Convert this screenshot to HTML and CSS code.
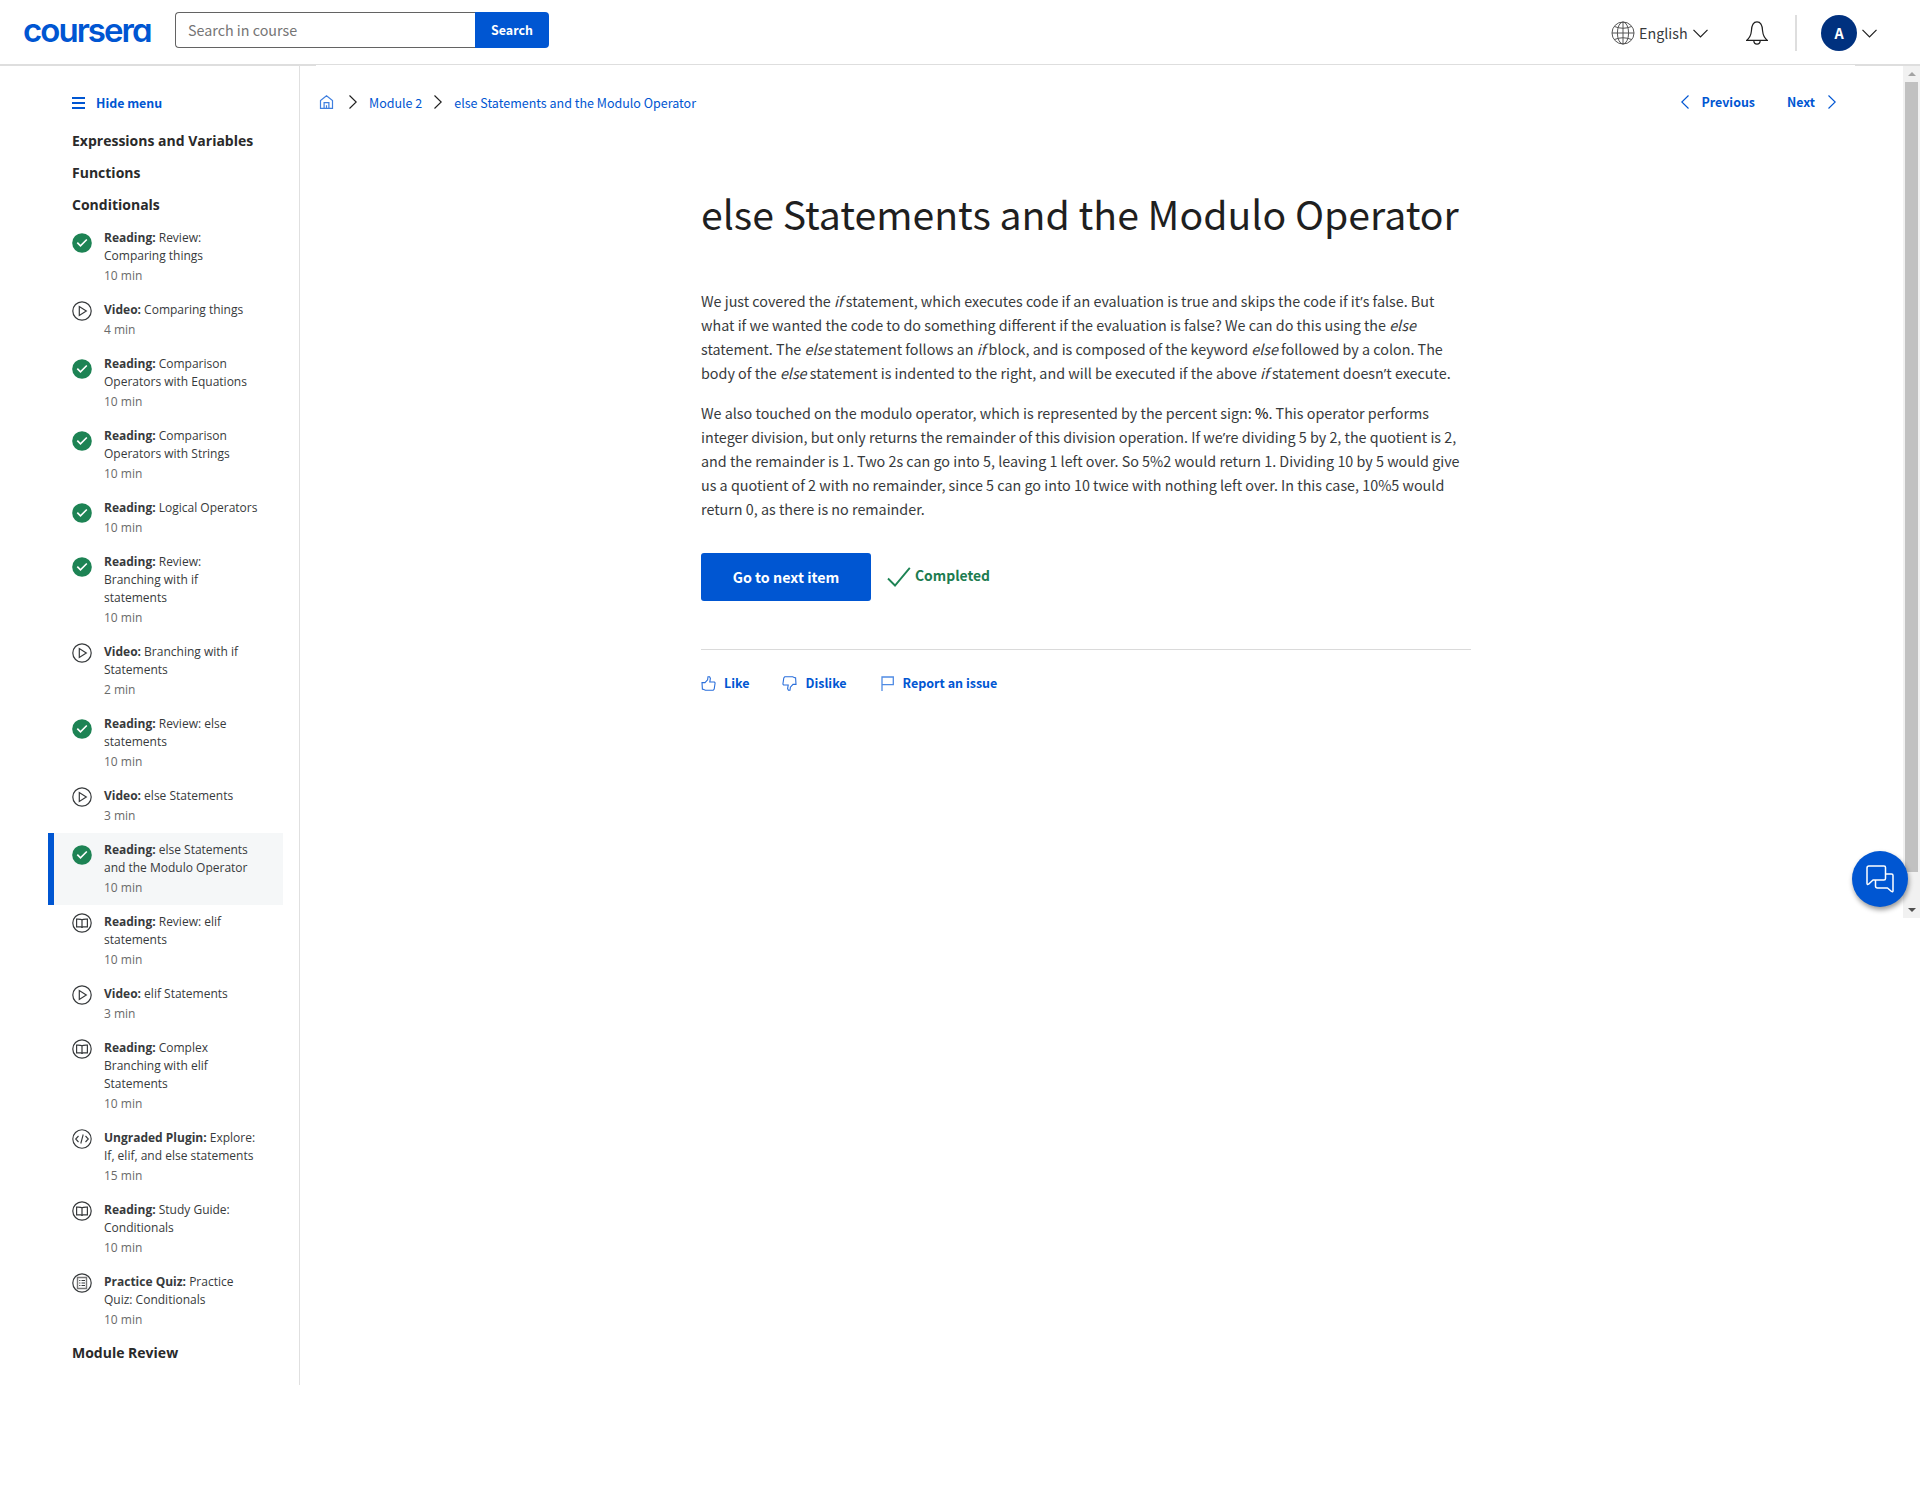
FILE: index.html
```html
<!DOCTYPE html>
<html lang="en">
<head>
<meta charset="utf-8">
<title>else Statements and the Modulo Operator | Coursera</title>
<link rel="stylesheet" href="styles.css">
</head>
<body>
<svg class="defs" aria-hidden="true">
  <symbol id="done" viewBox="0 0 20 20"><circle cx="10" cy="10" r="9.8" fill="#1d8354"/><path d="M5.3 9.6l3.2 3.2 6.3-6.3" fill="none" stroke="#fff" stroke-width="1.6"/></symbol>
  <symbol id="play" viewBox="0 0 20 20"><g fill="none" stroke="#373a3c" stroke-width="1.2"><circle cx="10" cy="10" r="9.2"/><path d="M7.3 5.5v9l7-4.5z"/></g></symbol>
  <symbol id="book" viewBox="0 0 20 20"><g fill="none" stroke="#373a3c" stroke-width="1.2"><circle cx="10" cy="10" r="9.2"/><path d="M10 6.8C9 6 7 6 4.6 6.100v7.800H9q1 0 1 1q0-1 1-1h4.400V6.100C13 6 11 6 10 6.800zV14.500"/></g></symbol>
  <symbol id="code" viewBox="0 0 20 20"><g fill="none" stroke="#373a3c" stroke-width="1.1"><circle cx="10" cy="10" r="9.200"/><path d="M6.500 7L3.700 10l2.800 3M13.500 7l2.800 3-2.800 3M11.200 5.500l-2.400 9"/></g></symbol>
  <symbol id="quiz" viewBox="0 0 20 20"><g fill="none" stroke="#373a3c" stroke-width="1.2"><circle cx="10" cy="10" r="9.200"/><path d="M5.500 4.500h9v11h-9z" stroke="#777" stroke-width="1.400"/><path d="M7.200 7.500h1.200M7.200 10h1.200M7.200 12.500h1.200M9.500 7.500h3.500M9.500 10h3.500M9.500 12.500h3.500"/></g></symbol>
  <symbol id="right" viewBox="0 0 8 14"><path d="M.5.500L7.200 7 .5 13.500" fill="none" stroke="currentColor" stroke-width="1.150"/></symbol>
  <symbol id="left" viewBox="0 0 8 14"><path d="M7.500.500L.8 7l6.700 6.500" fill="none" stroke="currentColor" stroke-width="1.150"/></symbol>
  <symbol id="down" viewBox="0 0 15 9"><path d="M.5.800l7 7 7-7" fill="none" stroke="currentColor" stroke-width="1.200"/></symbol>
</svg>

<header class="header">
  <a class="logo">coursera</a>
  <form class="search">
    <div class="search-field">Search in course</div>
    <div class="search-button">Search</div>
  </form>
  <div class="account">
    <svg class="globe" viewBox="0 0 24 24" fill="none" stroke="#555" stroke-width="1"><circle cx="12" cy="12" r="11"/><ellipse cx="12" cy="12" rx="5.600" ry="11"/><path d="M12 1v22M1 12h22M3.500 5.500q8.500 3.500 17 0M3.500 18.500q8.500-3.500 17 0"/></svg>
    <span class="language">English</span>
    <svg class="down language-arrow"><use href="#down"/></svg>
    <svg class="bell" viewBox="0 0 22 24" fill="none" stroke="#1f1f1f" stroke-width="1.200"><path d="M.6 19.400c3-2.400 4.400-5 4.800-9.400C5.600 4 7 .8 11 .8S16.400 4 16.600 10c.4 4.400 1.800 7 4.800 9.400zM7.800 19.600c.2 4.600 6.200 4.600 6.400 0"/></svg>
    <i class="divider"></i>
    <span class="avatar">A</span>
    <svg class="down"><use href="#down"/></svg>
  </div>
</header>

<div class="page">
  <aside class="sidebar">
    <a class="hide-menu"><i class="bars"></i>Hide menu</a>
    <nav class="outline">
      <h2>Expressions and Variables</h2>
      <h2>Functions</h2>
      <h2>Conditionals</h2>
      <a class="item done"><svg><use href="#done"/></svg><p><b>Reading:</b> Review:<br>Comparing things<small>10 min</small></p></a>
      <a class="item"><svg><use href="#play"/></svg><p><b>Video:</b> Comparing things<small>4 min</small></p></a>
      <a class="item done"><svg><use href="#done"/></svg><p><b>Reading:</b> Comparison<br>Operators with Equations<small>10 min</small></p></a>
      <a class="item done"><svg><use href="#done"/></svg><p><b>Reading:</b> Comparison<br>Operators with Strings<small>10 min</small></p></a>
      <a class="item done"><svg><use href="#done"/></svg><p><b>Reading:</b> Logical Operators<small>10 min</small></p></a>
      <a class="item done"><svg><use href="#done"/></svg><p><b>Reading:</b> Review:<br>Branching with if<br>statements<small>10 min</small></p></a>
      <a class="item"><svg><use href="#play"/></svg><p><b>Video:</b> Branching with if<br>Statements<small>2 min</small></p></a>
      <a class="item done"><svg><use href="#done"/></svg><p><b>Reading:</b> Review: else<br>statements<small>10 min</small></p></a>
      <a class="item"><svg><use href="#play"/></svg><p><b>Video:</b> else Statements<small>3 min</small></p></a>
      <a class="item done current"><svg><use href="#done"/></svg><p><b>Reading:</b> else Statements<br>and the Modulo Operator<small>10 min</small></p></a>
      <a class="item"><svg><use href="#book"/></svg><p><b>Reading:</b> Review: elif<br>statements<small>10 min</small></p></a>
      <a class="item"><svg><use href="#play"/></svg><p><b>Video:</b> elif Statements<small>3 min</small></p></a>
      <a class="item"><svg><use href="#book"/></svg><p><b>Reading:</b> Complex<br>Branching with elif<br>Statements<small>10 min</small></p></a>
      <a class="item"><svg><use href="#code"/></svg><p><b>Ungraded Plugin:</b> Explore:<br>If, elif, and else statements<small>15 min</small></p></a>
      <a class="item"><svg><use href="#book"/></svg><p><b>Reading:</b> Study Guide:<br>Conditionals<small>10 min</small></p></a>
      <a class="item"><svg><use href="#quiz"/></svg><p><b>Practice Quiz:</b> Practice<br>Quiz: Conditionals<small>10 min</small></p></a>
      <h2>Module Review</h2>
    </nav>
  </aside>

  <main class="main">
    <div class="topbar">
      <nav class="crumbs">
        <svg class="home" viewBox="0 0 14 14" fill="none" stroke="#3f7fdf" stroke-width="1.200"><path d="M1 13.300V5.500L7 .8l6 4.700v7.800zM4.600 13.300V7.600h4.800v5.700M7 13.300v-3"/></svg>
        <svg class="chevron"><use href="#right"/></svg>
        <a>Module 2</a>
        <svg class="chevron"><use href="#right"/></svg>
        <a>else Statements and the Modulo Operator</a>
      </nav>
      <nav class="pager">
        <a><svg class="chevron"><use href="#left"/></svg>Previous</a>
        <a>Next<svg class="chevron"><use href="#right"/></svg></a>
      </nav>
    </div>
    <article class="article">
      <h1>else Statements and the Modulo Operator</h1>
      <p>We just covered the <em>if</em> statement, which executes code if an evaluation is true and skips the code if it<span class="apos">’</span>s false. But<br>what if we wanted the code to do something different if the evaluation is false? We can do this using the <em>else</em><br>statement. The <em>else</em> statement follows an <em>if</em> block, and is composed of the keyword <em>else</em> followed by a colon. The<br>body of the <em>else</em> statement is indented to the right, and will be executed if the above <em>if</em> statement doesn<span class="apos">’</span>t execute.</p>
      <p>We also touched on the modulo operator, which is represented by the percent sign: <strong>%</strong>. This operator performs<br>integer division, but only returns the remainder of this division operation. If we<span class="apos">’</span>re dividing 5 by 2, the quotient is 2,<br>and the remainder is 1. Two 2s can go into 5, leaving 1 left over. So 5%2 would return 1. Dividing 10 by 5 would give<br>us a quotient of 2 with no remainder, since 5 can go into 10 twice with nothing left over. In this case, 10%5 would<br>return 0, as there is no remainder.</p>
      <div class="actions">
        <a class="next-button">Go to next item</a>
        <svg class="tick" viewBox="0 0 24 20" fill="none" stroke="#1d8354" stroke-width="1.900"><path d="M1 11.500l7 7L22.800.800"/></svg>
        <span class="completed">Completed</span>
      </div>
      <div class="feedback">
        <a><svg viewBox="0 0 15 15" fill="none" stroke="#2a6fdb" stroke-width="1.100"><path d="M1 6.600h3L6.600 3.800 7 .8h1.600l.8 1.600-.6 3.600h4.600l.7 1-.9 6-1 1.300H4.400L2.200 13.300H1.400z"/></svg>Like</a>
        <a><svg viewBox="0 0 15 15" fill="none" stroke="#2a6fdb" stroke-width="1.100"><path d="M14 8.400h-3L8.400 11.200 8 14.200H6.400L5.600 12.600 6.200 9H1.600L.9 8l.9-6 1-1.300h7.800l2.200 1h.8z"/></svg>Dislike</a>
        <a><svg viewBox="0 0 15 15" fill="none" stroke="#4f8be4" stroke-width="1.300"><path d="M2 15V1h11.300V8.600H2"/></svg>Report an issue</a>
      </div>
    </article>
  </main>

  <div class="scrollbar"><i class="arrow-up"></i><i class="thumb"></i><i class="arrow-down"></i></div>
</div>

<a class="chat"><svg viewBox="0 0 28 28" fill="none" stroke="#fff" stroke-width="1.500" stroke-linejoin="round"><path d="M3 1h15q1.500 0 1.500 1.500v11Q19.500 15 18 15H7l-4.500 4.200q-1.500.8-1.500-1V3q0-2 2-2z"/><path d="M20 9h5.500Q27 9 27 10.500v15.300q0 1.700-1.500.7L21.500 23H11.500q-2 0-2-2V15"/></svg></a>
</body>
</html>
```
FILE: styles.css
```css
* { box-sizing: border-box; }
body {
  margin: 0;
  height: 1495px;
  background: #fff;
  color: #1f1f1f;
  font-family: "Noto Sans CJK SC", sans-serif;
  overflow: hidden;
}
svg { display: block; flex: none; }
i { flex: none; }
.defs { position: absolute; width: 0; height: 0; }

.header {
  display: flex;
  align-items: flex-start;
  height: 65px;
  border-bottom: 1px solid #dedede;
}
.logo {
  width: 151px;
  padding-left: 23px;
  margin-top: 9px;
  color: #0056d2;
  font: 600 33px/42px Inter, sans-serif;
  font-feature-settings: "cv11";
  letter-spacing: -1.95px;
}
.search {
  display: flex;
  width: 374px;
  height: 36px;
  margin: 12px 0 0 24px;
  line-height: 34px;
}
.search-field {
  width: 300px;
  padding-left: 12px;
  border: 1px solid #636363;
  border-right: 0;
  border-radius: 4px 0 0 4px;
  color: #757575;
  font-size: 14.3px;
}
.search-button {
  flex: 1;
  border-radius: 0 4px 4px 0;
  background: #0056d2;
  color: #fff;
  font-size: 12.4px;
  font-weight: 700;
  line-height: 36px;
  text-align: center;
}
.account {
  display: flex;
  align-items: center;
  height: 66px;
  margin-left: auto;
  padding-right: 43px;
  color: #373a3c;
}
.globe { width: 24px; height: 24px; margin-right: 4px; }
.language { width: 54px; font-size: 14.3px; line-height: 24px; }
.down { width: 15px; height: 9px; margin-left: 5px; color: #1f1f1f; }
.language-arrow { margin-left: 0; }
.bell { width: 22px; height: 24px; margin: 0 27px 0 38px; }
.divider { width: 2px; height: 36px; background: #dedede; }
.avatar {
  width: 36px;
  height: 36px;
  margin-left: 24px;
  border-radius: 50%;
  background: #00317f;
  color: #fff;
  font-size: 14.4px;
  font-weight: 700;
  line-height: 36px;
  text-align: center;
}

.page {
  display: flex;
  align-items: flex-start;
  background:
    linear-gradient(#dedede, #dedede) 0 0 / 316px 1px no-repeat,
    linear-gradient(#dedede, #dedede) 100% 0 / 65px 1px no-repeat;
}
.sidebar {
  width: 300px;
  height: 1320px;
  border-right: 1px solid #e0e0e0;
}
.hide-menu {
  display: flex;
  align-items: center;
  gap: 11px;
  height: 60px;
  padding: 15px 0 0 72px;
  color: #0056d2;
  font-size: 12.4px;
  font-weight: 700;
}
.bars {
  width: 13px;
  height: 12px;
  border: solid #0056d2;
  border-width: 2px 0;
  background: linear-gradient(#0056d2, #0056d2) 0 3px / 13px 2px no-repeat;
}
.outline { width: 235px; margin-left: 48px; font-family: "Open Sans", sans-serif; }
.outline h2 {
  margin: 0;
  padding-left: 24px;
  color: #2a2a2a;
  font-size: 14px;
  font-weight: 700;
  line-height: 32px;
}
.item {
  display: flex;
  gap: 12px;
  padding: 8px 0 8px 24px;
  color: #373a3c;
  font-size: 12px;
  line-height: 18px;
}
.item svg { width: 20px; height: 20px; }
.item.done svg { margin-top: 4px; }
.item p { margin: 0; white-space: nowrap; }
.item small { display: block; margin-top: 2px; color: #6a6a6a; font-size: 12px; }
.current { padding-left: 18px; border-left: 6px solid #0056d2; background: #f5f7f8; }

.main { flex: 1; }
.topbar {
  display: flex;
  justify-content: space-between;
  padding: 24px 67px 0 19px;
  color: #0056d2;
}
.crumbs { height: 26px; font-size: 12.5px; }
.crumbs, .pager, .pager a { display: flex; align-items: center; }
.home { width: 15px; height: 14px; margin-right: 15px; }
.chevron { width: 8px; height: 14px; }
.crumbs .chevron { color: #1f1f1f; }
.crumbs a { margin: 0 12px; }
.pager { gap: 32px; height: 26px; font-size: 12.4px; font-weight: 700; }
.pager a { gap: 13px; }

.article { width: 771px; margin: 70px 0 0 401px; white-space: nowrap; }
.article h1 { margin: 0 0 48px; font-size: 39.2px; font-weight: 400; line-height: 56px; }
.article p { margin: 0 0 16px; color: #373a3c; font-size: 14.33px; line-height: 24px; }
.article strong { color: #1f1f1f; font-weight: 500; }
.apos { font-family: "Open Sans", sans-serif; line-height: 1; }
.actions {
  display: flex;
  align-items: center;
  height: 48px;
  margin-top: 32px;
}
.next-button {
  width: 170px;
  height: 48px;
  margin-right: 16px;
  border-radius: 3px;
  background: #0056d2;
  color: #fff;
  font-size: 14.3px;
  font-weight: 700;
  line-height: 48px;
  text-align: center;
}
.tick { width: 24px; height: 20px; }
.completed { margin: -4px 0 0 4px; color: #1d7c50; font-size: 13.9px; font-weight: 700; }
.feedback {
  display: flex;
  gap: 33px;
  width: 770px;
  margin-top: 48px;
  padding-top: 23px;
  border-top: 1px solid #dadada;
  color: #0056d2;
  font-size: 12.5px;
  font-weight: 700;
  line-height: 20px;
}
.feedback a { display: flex; align-items: center; gap: 8px; }
.feedback svg { width: 15px; height: 15px; }

.scrollbar {
  display: flex;
  flex-direction: column;
  align-items: center;
  width: 17px;
  height: 853px;
  border-top: 1px solid #dedede;
  background: #f1f1f1;
}
.arrow-up { margin: 6px 0; border: 4px solid transparent; border-top: 0; border-bottom-color: #a3a3a3; }
.thumb { width: 13px; height: 790px; background: #c1c1c1; }
.arrow-down { margin-top: 36px; border: 4px solid transparent; border-bottom: 0; border-top-color: #505050; }

.chat {
  position: absolute;
  left: 1852px;
  top: 851px;
  display: flex;
  align-items: center;
  justify-content: center;
  width: 56px;
  height: 56px;
  border-radius: 50%;
  background: #0056d2;
  box-shadow: 1px 3px 5px rgba(0, 0, 0, .4);
}
.chat svg { width: 28px; height: 28px; }
```
